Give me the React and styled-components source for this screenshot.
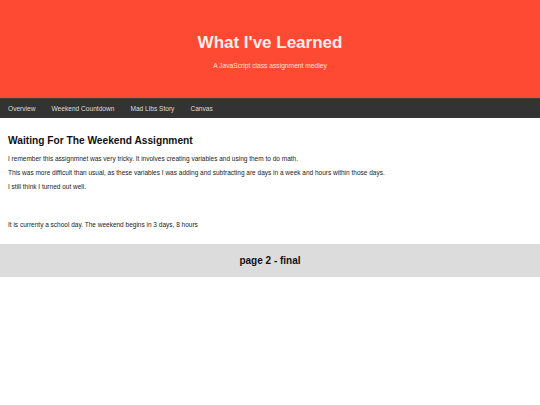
import styled, { createGlobalStyle } from 'styled-components';

const Global = createGlobalStyle`
  body {
    margin: 0;
    font-family: "Liberation Sans", Arial, sans-serif;
    background: #fff;
  }
`

const navItems = ['Overview', 'Weekend Countdown', 'Mad Libs Story', 'Canvas'];

export default function App(){
  return (
    <>
      <Global />
      <Header>
        <Title>What I've Learned</Title>
        <Subtitle>A JavaScript class assignment medley</Subtitle>
      </Header>
      <Nav>
        {navItems.map((el, i) => <NavLink key={i}>{el}</NavLink>)}
      </Nav>
      <Main>
        <Heading>Waiting For The Weekend Assignment</Heading>
        <P>I remember this assignmnet was very tricky. It involves creating variables and using them to do math.</P>
        <P>This was more difficult than usual, as these variables I was adding and subtracting are days in a week and hours within those days.</P>
        <P>I still think I turned out well.</P>
        <Result>It is currenty a school day. The weekend begins in 3 days, 8 hours</Result>
      </Main>
      <Footer>page 2 - final</Footer>
    </>
  )
}

const Header = styled.header`
  background: #ff4a33;
  height: 98px;
  display: flex;
  flex-direction: column;
  align-items: center;
  justify-content: center;
  color: #fff;
  padding-top: 4px;
  box-sizing: border-box;
`

const Title = styled.h1`
  margin: 0;
  font-size: 17px;
  font-weight: bold;
  color: #fdf0ec;
`

const Subtitle = styled.p`
  margin: 9px 0 0;
  font-size: 6.7px;
  color: #fde0da;
`

const Nav = styled.nav`
  background: #333;
  border-top: 1px solid #4a3a37;
  height: 19px;
  display: flex;
  align-items: center;
`

const NavLink = styled.a`
  color: #ddd;
  font-size: 6.6px;
  padding: 0 8px;
  cursor: pointer;
`

const Main = styled.main`
  padding: 12px 8px 0;
  height: 126px;
  box-sizing: border-box;
`

const Heading = styled.h2`
  margin: 5px 0 9px;
  font-size: 10.2px;
  font-weight: bold;
  color: #111;
`

const P = styled.p`
  margin: 0 0 6px;
  font-size: 6.5px;
  line-height: 8px;
  color: #222;
`

const Result = styled(P)`
  margin-top: 30px;
`

const Footer = styled.footer`
  background: #dcdcdc;
  height: 33px;
  display: flex;
  align-items: center;
  justify-content: center;
  font-size: 10px;
  font-weight: bold;
  color: #111;
`
